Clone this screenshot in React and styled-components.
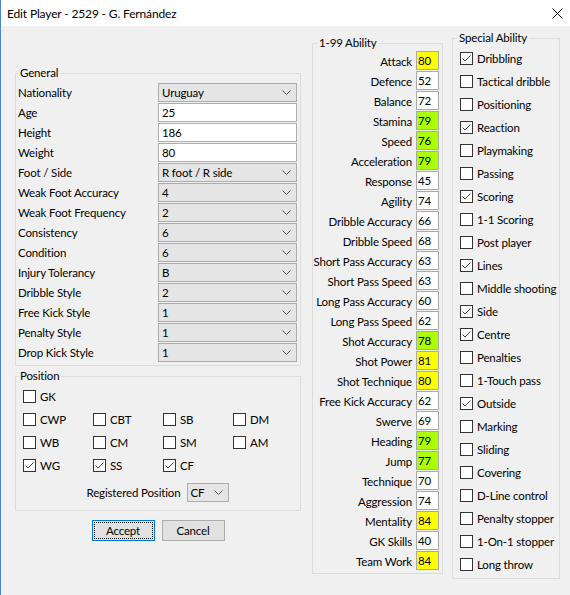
import React from "react";
import styled, { createGlobalStyle } from "styled-components";

const general = [
  { label: "Nationality", value: "Uruguay", kind: "combo" },
  { label: "Age", value: "25", kind: "text" },
  { label: "Height", value: "186", kind: "text" },
  { label: "Weight", value: "80", kind: "text" },
  { label: "Foot / Side", value: "R foot / R side", kind: "combo" },
  { label: "Weak Foot Accuracy", value: "4", kind: "combo" },
  { label: "Weak Foot Frequency", value: "2", kind: "combo" },
  { label: "Consistency", value: "6", kind: "combo" },
  { label: "Condition", value: "6", kind: "combo" },
  { label: "Injury Tolerancy", value: "B", kind: "combo" },
  { label: "Dribble Style", value: "2", kind: "combo" },
  { label: "Free Kick Style", value: "1", kind: "combo" },
  { label: "Penalty Style", value: "1", kind: "combo" },
  { label: "Drop Kick Style", value: "1", kind: "combo" },
];

const positions = [
  [["GK", false]],
  [["CWP", false], ["CBT", false], ["SB", false], ["DM", false]],
  [["WB", false], ["CM", false], ["SM", false], ["AM", false]],
  [["WG", true], ["SS", true], ["CF", true]],
];

const abilities = [
  ["Attack", 80], ["Defence", 52], ["Balance", 72], ["Stamina", 79],
  ["Speed", 76], ["Acceleration", 79], ["Response", 45], ["Agility", 74],
  ["Dribble Accuracy", 66], ["Dribble Speed", 68], ["Short Pass Accuracy", 63],
  ["Short Pass Speed", 63], ["Long Pass Accuracy", 60], ["Long Pass Speed", 62],
  ["Shot Accuracy", 78], ["Shot Power", 81], ["Shot Technique", 80],
  ["Free Kick Accuracy", 62], ["Swerve", 69], ["Heading", 79], ["Jump", 77],
  ["Technique", 70], ["Aggression", 74], ["Mentality", 84], ["GK Skills", 40],
  ["Team Work", 84],
];

const specials = [
  ["Dribbling", true], ["Tactical dribble", false], ["Positioning", false],
  ["Reaction", true], ["Playmaking", false], ["Passing", false],
  ["Scoring", true], ["1-1 Scoring", false], ["Post player", false],
  ["Lines", true], ["Middle shooting", false], ["Side", true],
  ["Centre", true], ["Penalties", false], ["1-Touch pass", false],
  ["Outside", true], ["Marking", false], ["Sliding", false],
  ["Covering", false], ["D-Line control", false], ["Penalty stopper", false],
  ["1-On-1 stopper", false], ["Long throw", false],
];

function toneOf(v) {
  if (v >= 80) return "high";
  if (v >= 75) return "good";
  return "plain";
}

function Chevron() {
  return (
    <svg width="9" height="5" viewBox="0 0 9 5">
      <polyline points="0.5,0.5 4.5,4.5 8.5,0.5" fill="none" stroke="#555" strokeWidth="1" />
    </svg>
  );
}

function Check({ checked, label }) {
  return (
    <CheckItem>
      <Box>
        {checked && (
          <svg width="11" height="11" viewBox="0 0 11 11">
            <polyline points="1.5,5.5 4,8 9.5,2.5" fill="none" stroke="#444" strokeWidth="1" />
          </svg>
        )}
      </Box>
      <span>{label}</span>
    </CheckItem>
  );
}

function Combo({ value, width }) {
  return (
    <ComboBox $width={width}>
      <span>{value}</span>
      <Chevron />
    </ComboBox>
  );
}

export default function App() {
  return (
    <>
      <GlobalStyle />
      <Window>
        <TitleBar>
          <span>Edit Player - 2529 - G. Fernández</span>
          <CloseIcon>
            <svg width="11" height="11" viewBox="0 0 11 11">
              <path d="M0.5 0.5 L10.5 10.5 M10.5 0.5 L0.5 10.5" stroke="#000" strokeWidth="1" />
            </svg>
          </CloseIcon>
        </TitleBar>
        <Body>
          <LeftColumn>
            <GeneralGroup>
              <Legend>General</Legend>
              {general.map((row) => (
                <FieldRow key={row.label}>
                  <FieldLabel>{row.label}</FieldLabel>
                  {row.kind === "combo" ? (
                    <Combo value={row.value} width={139} />
                  ) : (
                    <TextBox>{row.value}</TextBox>
                  )}
                </FieldRow>
              ))}
            </GeneralGroup>
            <PositionGroup>
              <Legend>Position</Legend>
              {positions.map((row, i) => (
                <PositionRow key={i}>
                  {row.map(([label, checked]) => (
                    <Check key={label} label={label} checked={checked} />
                  ))}
                </PositionRow>
              ))}
              <RegisteredRow>
                <span>Registered Position</span>
                <Combo value="CF" width={42} />
              </RegisteredRow>
            </PositionGroup>
            <ButtonRow>
              <Button $primary>Accept</Button>
              <Button>Cancel</Button>
            </ButtonRow>
          </LeftColumn>
          <AbilityGroup>
            <Legend>1-99 Ability</Legend>
            {abilities.map(([label, value]) => (
              <AbilityRow key={label}>
                <span>{label}</span>
                <ValueBox $tone={toneOf(value)}>{value}</ValueBox>
              </AbilityRow>
            ))}
          </AbilityGroup>
          <SpecialGroup>
            <Legend>Special Ability</Legend>
            {specials.map(([label, checked]) => (
              <SpecialRow key={label}>
                <Check label={label} checked={checked} />
              </SpecialRow>
            ))}
          </SpecialGroup>
        </Body>
      </Window>
    </>
  );
}

const GlobalStyle = createGlobalStyle`
  body {
    margin: 0;
    font-family: Lato, "Liberation Sans", sans-serif;
    font-size: 11.5px;
    letter-spacing: -0.15px;
    color: #000;
  }
`;

const Window = styled.div`
  width: 570px;
  height: 595px;
  box-sizing: border-box;
  background: #f0f0f0;
  border-left: 1px solid #4a86c8;
  overflow: hidden;
`;

const TitleBar = styled.div`
  height: 26px;
  background: #ffffff;
  display: flex;
  align-items: center;
  padding-left: 6px;
  font-size: 12px;
`;

const CloseIcon = styled.span`
  margin-left: auto;
  margin-right: 7px;
  display: flex;
`;

const Body = styled.div`
  display: flex;
  align-items: flex-start;
  padding-left: 14px;
`;

const LeftColumn = styled.div`
  width: 286px;
  margin-top: 40px;
  display: flex;
  flex-direction: column;
`;

const Group = styled.fieldset`
  margin: 0;
  min-width: 0;
  box-sizing: border-box;
  border: 1px solid #dcdcdc;
  padding: 0 3px 2px 2px;
`;

const Legend = styled.legend`
  padding: 0 2px;
  line-height: 14px;
`;

const GeneralGroup = styled(Group)`
  width: 286px;
  padding-top: 3px;
  padding-bottom: 2px;
`;

const FieldRow = styled.div`
  display: flex;
  height: 20px;
`;

const FieldLabel = styled.span`
  flex: 1;
  line-height: 19px;
`;

const TextBox = styled.div`
  width: 139px;
  height: 19px;
  box-sizing: border-box;
  background: #ffffff;
  border: 1px solid #abadb3;
  padding-left: 3px;
  line-height: 17px;
`;

const ComboBox = styled.div`
  width: ${(p) => p.$width}px;
  height: 19px;
  box-sizing: border-box;
  background: #e5e5e5;
  border: 1px solid #acacac;
  display: flex;
  align-items: center;
  justify-content: space-between;
  padding: 0 5px 0 3px;
  line-height: 17px;
`;

const PositionGroup = styled(Group)`
  width: 286px;
  margin-top: 3px;
  padding-top: 2px;
  padding-bottom: 8px;
`;

const PositionRow = styled.div`
  display: grid;
  grid-template-columns: repeat(4, 70px);
  height: 23px;
  align-items: center;
  margin-left: 5px;
`;

const CheckItem = styled.div`
  display: flex;
  align-items: center;
  gap: 4px;
  white-space: nowrap;
`;

const Box = styled.span`
  width: 13px;
  height: 13px;
  flex-shrink: 0;
  box-sizing: border-box;
  border: 1px solid #333333;
  background: #ffffff;
  display: flex;
  align-items: center;
  justify-content: center;
`;

const RegisteredRow = styled.div`
  display: flex;
  align-items: center;
  justify-content: center;
  gap: 6px;
  margin-top: 6px;
  height: 19px;
`;

const ButtonRow = styled.div`
  display: flex;
  justify-content: center;
  gap: 7px;
  margin-top: 9px;
`;

const Button = styled.button`
  width: 63px;
  height: 21px;
  padding: 0;
  font: inherit;
  letter-spacing: inherit;
  color: #000;
  background: #e1e1e1;
  border: 1px solid ${(p) => (p.$primary ? "#0078d7" : "#adadad")};
  outline: ${(p) => (p.$primary ? "1px dotted #000" : "none")};
  outline-offset: -3px;
`;

const AbilityGroup = styled(Group)`
  width: 131px;
  margin-top: 10px;
  margin-left: 11px;
  padding: 1px 3px 2px 2px;
  & > legend {
    margin-left: 2px;
  }
`;

const AbilityRow = styled.div`
  display: flex;
  justify-content: flex-end;
  align-items: center;
  gap: 4px;
  height: 20px;
  white-space: nowrap;
`;

const ValueBox = styled.div`
  width: 23px;
  height: 19px;
  flex-shrink: 0;
  box-sizing: border-box;
  border: 1px solid #a9a9a9;
  padding-left: 1px;
  line-height: 17px;
  align-self: flex-start;
  background: ${(p) =>
    p.$tone === "high" ? "#ffff00" : p.$tone === "good" ? "#aaff00" : "#ffffff"};
`;

const SpecialGroup = styled(Group)`
  width: 108px;
  margin-top: 5px;
  margin-left: 9px;
  padding: 2px 2px 2px 2px;
  & > legend {
    margin-left: 2px;
  }
`;

const SpecialRow = styled.div`
  height: 23px;
  display: flex;
  align-items: center;
  margin-left: 5px;
`;
